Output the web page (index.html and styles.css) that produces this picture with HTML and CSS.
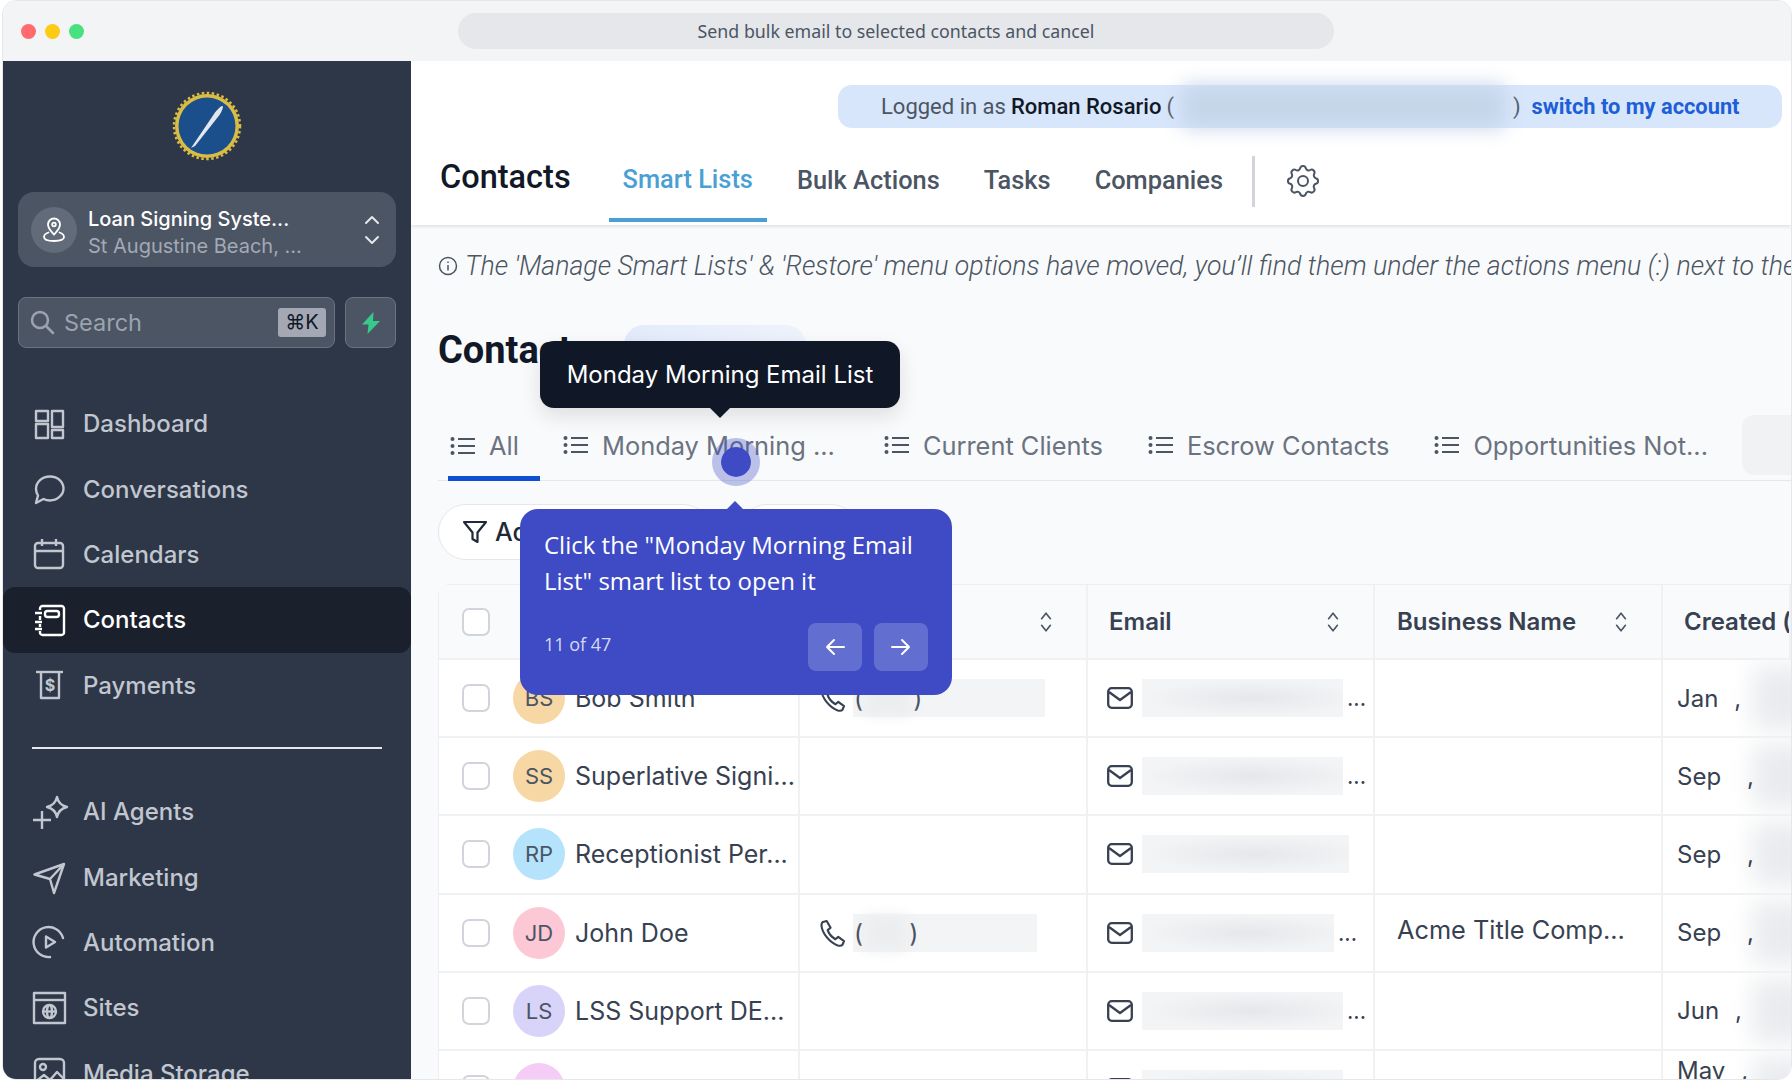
FILE: index.html
```html
<!DOCTYPE html>
<html lang="en">

<head>
    <meta charset="UTF-8">
    <title>Send bulk email to selected contacts and cancel</title>
    <link rel="stylesheet" href="styles.css">
</head>

<body>
    <svg class="icon-defs" width="0" height="0">
        <defs>
            <symbol id="list" viewBox="0 0 26 20">
                <circle cx="2.5" cy="3" r="2" fill="currentColor" />
                <circle cx="2.5" cy="10" r="2" fill="currentColor" />
                <circle cx="2.5" cy="17" r="2" fill="currentColor" />
                <path d="M8 3h17M8 10h17M8 17h17" fill="none" stroke="currentColor" stroke-width="2" />
            </symbol>
            <symbol id="mail" viewBox="0 0 26 22">
                <rect x="1.2" y="1.2" width="23.6" height="19.6" rx="3.5" fill="none" stroke="currentColor" stroke-width="2.3" />
                <path d="M2 5l11 8 11-8" fill="none" stroke="currentColor" stroke-width="2.3" />
            </symbol>
            <symbol id="phone" viewBox="0 0 26 28">
                <path d="M3 2.5l4-1 4 7-3 2.5c1 3.500 4 7 8 9.500l3-2.500 6 4.500-1.500 3.500c-1 1.500-3 1.500-5 1C10 24 2 14 1.500 6 1.500 4.500 2 3.200 3 2.500z" fill="none" stroke="currentColor" stroke-width="2.200" stroke-linejoin="round" />
            </symbol>
            <symbol id="sort" viewBox="0 0 12 20">
                <path d="M2 7l4-5 4 5M2 13l4 5 4-5" fill="none" stroke="currentColor" stroke-width="1.500" stroke-linecap="round" stroke-linejoin="round" />
            </symbol>
        </defs>
    </svg>

    <div class="window">
        <div class="title-bar">
            <div class="lights">
                <span class="light red"></span>
                <span class="light yellow"></span>
                <span class="light green"></span>
            </div>
            <div class="address">Send bulk email to selected contacts and cancel</div>
        </div>

        <div class="app">
            <aside class="sidebar">
                <div class="logo">
                    <svg width="70" height="70" viewBox="0 0 70 70">
                        <circle cx="35" cy="35" r="32" fill="#d9bd45" />
                        <circle cx="35" cy="35" r="33" fill="none" stroke="#d9bd45" stroke-width="2.500" stroke-dasharray="2.500 2.500" />
                        <circle cx="35" cy="35" r="28.500" fill="#1b4f8c" />
                        <path d="M19 57L42 23c2-3 7-8.500 8.500-8s-1 6-3 9L23 55z" fill="#e3e6ec" />
                    </svg>
                </div>

                <div class="location">
                    <span class="location-avatar">
                        <svg width="24" height="26" viewBox="0 0 24 26" fill="none" stroke="#fff" stroke-width="1.800">
                            <path d="M12 17.500c-3-3.500-6-6-6-10a6 6 0 0 1 12 0c0 4-3 6.500-6 10z" />
                            <circle cx="12" cy="7.500" r="1.800" />
                            <path d="M6.500 15.500C3.500 16.500 2 18 2 20c0 2.500 3 4 10 4s10-1.500 10-4c0-2-1.500-3.500-4.500-4.500" stroke-linecap="round" />
                        </svg>
                    </span>
                    <div class="location-text">
                        <div class="location-name">Loan Signing Syste...</div>
                        <div class="location-city">St Augustine Beach, ...</div>
                    </div>
                    <svg class="location-caret" width="16" height="30" viewBox="0 0 16 30" fill="none" stroke="#e5e7eb" stroke-width="2" stroke-linecap="round" stroke-linejoin="round">
                        <path d="M2 8l6-6 6 6M2 22l6 6 6-6" />
                    </svg>
                </div>

                <div class="search-row">
                    <div class="search">
                        <svg width="25" height="25" viewBox="0 0 25 25" fill="none" stroke="#9ca3af" stroke-width="2.500" stroke-linecap="round">
                            <circle cx="10" cy="10" r="8" />
                            <path d="M16 16l7 7" />
                        </svg>
                        <span class="search-label">Search</span>
                        <span class="kbd">⌘K</span>
                    </div>
                    <div class="bolt">
                        <svg width="20" height="22" viewBox="0 0 20 22">
                            <path d="M12.500 0L1 12.500h6.500L6.500 22 19 9h-7z" fill="#37ca8c" />
                        </svg>
                    </div>
                </div>

                <nav class="nav">
                    <a class="nav-item">
                        <svg class="nav-icon" viewBox="0 0 32 32">
                            <rect x="3" y="3" width="12" height="10" />
                            <rect x="3" y="16" width="12" height="14" />
                            <rect x="19" y="3" width="11" height="16" />
                            <rect x="19" y="22" width="11" height="8" />
                        </svg>
                        Dashboard
                    </a>
                    <a class="nav-item">
                        <svg class="nav-icon" viewBox="0 0 32 32">
                            <path d="M3 30l2-7.500C3.500 20 3 18 3 16 3 9 9 3.500 17 3.500S30.500 9 30.500 15.500 24 27.500 17 27.500c-2.500 0-4.500-.5-6.500-1.500z" />
                        </svg>
                        Conversations
                    </a>
                    <a class="nav-item">
                        <svg class="nav-icon" viewBox="0 0 32 32">
                            <rect x="2" y="5" width="28" height="25" rx="3" />
                            <path d="M2 13h28M9 1v7M23 1v7" />
                        </svg>
                        Calendars
                    </a>
                    <a class="nav-item active">
                        <svg class="nav-icon" viewBox="0 0 32 32">
                            <path d="M7 6V4.500a2.500 2.500 0 0 1 2.500-2.500h19A2.500 2.500 0 0 1 31 4.500v24a2.500 2.500 0 0 1-2.500 2.500h-19A2.500 2.500 0 0 1 7 28.500V27M7 12v4M7 20v3" />
                            <rect x="12" y="7" width="14" height="6" rx="2.500" />
                            <path d="M2 9h7M2 18h7M2 25h7" />
                        </svg>
                        Contacts
                    </a>
                    <a class="nav-item">
                        <svg class="nav-icon" viewBox="0 0 32 32">
                            <path d="M3 3h27" />
                            <path d="M8 3v26h18V3" />
                            <text class="dollar" x="17" y="22">$</text>
                        </svg>
                        Payments
                    </a>

                    <div class="nav-divider"></div>

                    <a class="nav-item">
                        <svg class="nav-icon" viewBox="0 0 32 32">
                            <path d="M24 1c1 5 4 8.500 10 10-6 1.500-9 5-10 10-1-5-4-8.500-10-10 6-1.500 9-5 10-10z" />
                            <path d="M0 24h18M9 15v18" />
                        </svg>
                        AI Agents
                    </a>
                    <a class="nav-item">
                        <svg class="nav-icon" viewBox="0 0 32 32">
                            <path d="M1.500 13.500L31 3 21 32l-4-14zM17 18L31 3" />
                        </svg>
                        Marketing
                    </a>
                    <a class="nav-item">
                        <svg class="nav-icon" viewBox="0 0 32 32">
                            <path d="M30 12A15 15 0 1 0 17 31" stroke-linecap="round" />
                            <path d="M13 10.500l9 5.500-9 5.500z" />
                        </svg>
                        Automation
                    </a>
                    <a class="nav-item">
                        <svg class="nav-icon" viewBox="0 0 32 32">
                            <rect x="1" y="1" width="31" height="30" />
                            <path d="M1 8h31" />
                            <circle cx="16.500" cy="19.500" r="6.500" />
                            <ellipse cx="16.500" cy="19.500" rx="2.500" ry="6.500" />
                            <path d="M10 19.500h13" />
                        </svg>
                        Sites
                    </a>
                    <a class="nav-item">
                        <svg class="nav-icon" viewBox="0 0 32 32">
                            <rect x="2" y="2" width="29" height="29" rx="4" />
                            <circle cx="10" cy="10" r="3" />
                            <path d="M2 25l9-7 6 5 7-8 7 7" />
                        </svg>
                        Media Storage
                    </a>
                </nav>
            </aside>

            <main class="main">
                <header class="page-header">
                    <div class="impersonate">
                        <span class="imp-muted">Logged in as</span>
                        <strong class="imp-name">Roman Rosario</strong>
                        <span class="imp-muted">(</span>
                        <span class="imp-redact"></span>
                        <span class="imp-muted">)</span>
                        <a class="imp-link">switch to my account</a>
                    </div>
                    <div class="subnav">
                        <div class="subnav-title">Contacts</div>
                        <a class="subnav-tab active">Smart Lists</a>
                        <a class="subnav-tab">Bulk Actions</a>
                        <a class="subnav-tab">Tasks</a>
                        <a class="subnav-tab">Companies</a>
                        <span class="subnav-sep"></span>
                        <svg class="gear" width="40" height="40" viewBox="0 0 24 24" fill="none" stroke="#4b5563" stroke-width="1.200" stroke-linejoin="round">
                            <path d="M10.300 4.300c.4-1.800 3-1.800 3.400 0a1.700 1.700 0 0 0 2.600 1.100c1.500-.9 3.300.8 2.400 2.400a1.700 1.700 0 0 0 1 2.500c1.800.4 1.800 3 0 3.400a1.700 1.700 0 0 0-1 2.600c.9 1.500-.9 3.300-2.400 2.400a1.700 1.700 0 0 0-2.600 1c-.4 1.800-3 1.800-3.400 0a1.700 1.700 0 0 0-2.600-1c-1.500.9-3.300-.9-2.400-2.400a1.700 1.700 0 0 0-1-2.600c-1.800-.4-1.800-3 0-3.400a1.700 1.700 0 0 0 1-2.500c-.9-1.600.9-3.300 2.400-2.400a1.700 1.700 0 0 0 2.600-1.100z" />
                            <circle cx="12" cy="12" r="3" />
                        </svg>
                    </div>
                </header>

                <div class="content">
                    <p class="notice">
                        <svg class="notice-icon" width="20" height="20" viewBox="0 0 20 20" fill="none" stroke="#4b5563" stroke-width="1.500">
                            <circle cx="10" cy="10" r="8.500" />
                            <path d="M10 9v5.500M10 5.500v1.500" />
                        </svg>
                        <em>The 'Manage Smart Lists' &amp; 'Restore' menu options have moved, you’ll find them under the actions menu (:) next to the smart list name</em>
                    </p>

                    <div class="heading-row">
                        <h1>Contacts</h1>
                        <span class="heading-pill"></span>
                    </div>

                    <div class="list-tabs">
                        <a class="list-tab active"><svg class="list-icon"><use href="#list" /></svg>All</a>
                        <a class="list-tab wide"><svg class="list-icon"><use href="#list" /></svg>Monday Morning ...</a>
                        <a class="list-tab"><svg class="list-icon"><use href="#list" /></svg>Current Clients</a>
                        <a class="list-tab"><svg class="list-icon"><use href="#list" /></svg>Escrow Contacts</a>
                        <a class="list-tab"><svg class="list-icon"><use href="#list" /></svg>Opportunities Not...</a>
                        <span class="list-more"></span>
                    </div>

                    <div class="filters">
                        <div class="filter-pill first">
                            <svg width="26" height="26" viewBox="0 0 26 26" fill="none" stroke="#1f2937" stroke-width="2.200" stroke-linejoin="round">
                                <path d="M2 3h22l-8.500 10.500V23l-5-3v-6.500z" />
                            </svg>
                            Advanced Filters
                        </div>
                        <div class="filter-pill second"></div>
                    </div>

                    <div class="table">
                        <div class="row head">
                            <div class="cell check-name"><span class="checkbox"></span></div>
                            <div class="cell sortable"><svg class="sort"><use href="#sort" /></svg></div>
                            <div class="cell sortable">Email<svg class="sort"><use href="#sort" /></svg></div>
                            <div class="cell sortable business">Business Name<svg class="sort"><use href="#sort" /></svg></div>
                            <div class="cell created">Created (</div>
                        </div>

                        <div class="row">
                            <div class="cell check-name"><span class="checkbox"></span><span class="avatar orange">BS</span><span class="name">Bob Smith</span></div>
                            <div class="cell phone"><svg class="phone-icon"><use href="#phone" /></svg><span class="phone-redact"><span>(</span><span class="gap"></span><span>)</span></span></div>
                            <div class="cell email"><svg class="mail-icon"><use href="#mail" /></svg><span class="redact email-redact"></span><span class="dots">...</span></div>
                            <div class="cell"></div>
                            <div class="cell date"><span>Jan</span><span class="comma c1">,</span><span class="date-blur"></span></div>
                        </div>
                        <div class="row">
                            <div class="cell check-name"><span class="checkbox"></span><span class="avatar orange">SS</span><span class="name">Superlative Signi...</span></div>
                            <div class="cell"></div>
                            <div class="cell email"><svg class="mail-icon"><use href="#mail" /></svg><span class="redact email-redact"></span><span class="dots">...</span></div>
                            <div class="cell"></div>
                            <div class="cell date"><span>Sep</span><span class="comma c2">,</span><span class="date-blur"></span></div>
                        </div>
                        <div class="row">
                            <div class="cell check-name"><span class="checkbox"></span><span class="avatar blue">RP</span><span class="name">Receptionist Per...</span></div>
                            <div class="cell"></div>
                            <div class="cell email"><svg class="mail-icon"><use href="#mail" /></svg><span class="redact email-redact short"></span></div>
                            <div class="cell"></div>
                            <div class="cell date"><span>Sep</span><span class="comma c2">,</span><span class="date-blur"></span></div>
                        </div>
                        <div class="row">
                            <div class="cell check-name"><span class="checkbox"></span><span class="avatar pink">JD</span><span class="name">John Doe</span></div>
                            <div class="cell phone"><svg class="phone-icon"><use href="#phone" /></svg><span class="phone-redact narrow"><span>(</span><span class="gap"></span><span>)</span></span></div>
                            <div class="cell email"><svg class="mail-icon"><use href="#mail" /></svg><span class="redact email-redact mid"></span><span class="dots">...</span></div>
                            <div class="cell business"><span class="company">Acme Title Comp...</span></div>
                            <div class="cell date"><span>Sep</span><span class="comma c2">,</span><span class="date-blur"></span></div>
                        </div>
                        <div class="row">
                            <div class="cell check-name"><span class="checkbox"></span><span class="avatar purple">LS</span><span class="name">LSS Support DE...</span></div>
                            <div class="cell"></div>
                            <div class="cell email"><svg class="mail-icon"><use href="#mail" /></svg><span class="redact email-redact"></span><span class="dots">...</span></div>
                            <div class="cell"></div>
                            <div class="cell date"><span>Jun</span><span class="comma c1">,</span><span class="date-blur"></span></div>
                        </div>
                        <div class="row">
                            <div class="cell check-name"><span class="checkbox"></span><span class="avatar lilac"></span></div>
                            <div class="cell"></div>
                            <div class="cell email"><svg class="mail-icon"><use href="#mail" /></svg><span class="redact email-redact"></span></div>
                            <div class="cell"></div>
                            <div class="cell date wrapped"><span>May</span><span class="comma c1">,</span><span class="date-blur"></span></div>
                        </div>
                    </div>
                </div>

                <div class="tooltip">Monday Morning Email List</div>
                <span class="hotspot"></span>

                <div class="tour">
                    <p class="tour-text">Click the "Monday Morning Email List" smart list to open it</p>
                    <div class="tour-foot">
                        <span class="tour-count">11 of 47</span>
                        <div class="tour-buttons">
                            <button class="tour-btn">
                                <svg width="20" height="18" viewBox="0 0 20 18" fill="none" stroke="#fff" stroke-width="2" stroke-linecap="round" stroke-linejoin="round"><path d="M19 9H2M9 2L2 9l7 7" /></svg>
                            </button>
                            <button class="tour-btn">
                                <svg width="20" height="18" viewBox="0 0 20 18" fill="none" stroke="#fff" stroke-width="2" stroke-linecap="round" stroke-linejoin="round"><path d="M1 9h17M11 2l7 7-7 7" /></svg>
                            </button>
                        </div>
                    </div>
                </div>
            </main>
        </div>
    </div>
</body>

</html>
```

FILE: styles.css
```css
* {
    box-sizing: border-box;
}

html,
body {
    margin: 0;
    padding: 0;
    height: 1080px;
    overflow: hidden;
    background-color: #fff;
    font-family: "Inter", sans-serif;
}

.icon-defs {
    position: absolute;
}

.window {
    width: 1790px;
    height: 1080px;
    margin-left: 2px;
    border: 1px solid #e5e7eb;
    border-radius: 14px;
    overflow: hidden;
    display: flex;
    flex-direction: column;
}

/* title bar */
.title-bar {
    height: 60px;
    flex-shrink: 0;
    background-color: #f3f4f6;
    display: flex;
    align-items: center;
    padding-left: 18px;
}

.lights {
    display: flex;
    gap: 9px;
}

.light {
    width: 15px;
    height: 15px;
    border-radius: 50%;
}

.red {
    background-color: #ff6b6e;
}

.yellow {
    background-color: #fdcb14;
}

.green {
    background-color: #47e27f;
}

.address {
    width: 876px;
    height: 36px;
    margin-left: 374px;
    border-radius: 18px;
    background-color: #e5e7eb;
    color: #4b5563;
    font-family: "Noto Sans", sans-serif;
    font-size: 17.800px;
    line-height: 36px;
    text-align: center;
}

.app {
    flex: 1;
    display: flex;
    min-height: 0;
}

/* sidebar */
.sidebar {
    width: 408px;
    flex-shrink: 0;
    background-color: #2d3748;
    overflow: hidden;
}

.logo {
    height: 70px;
    margin-top: 30px;
    display: flex;
    justify-content: center;
}

.location {
    height: 75px;
    margin: 31px 15px 0;
    padding: 0 16px 0 13px;
    border-radius: 16px;
    background-color: #4c5564;
    display: flex;
    align-items: center;
}

.location-avatar {
    width: 46px;
    height: 46px;
    border-radius: 50%;
    background-color: #626b79;
    display: flex;
    align-items: center;
    justify-content: center;
    flex-shrink: 0;
}

.location-text {
    flex: 1;
    margin-left: 11px;
    padding-top: 6px;
}

.location-name {
    color: #fff;
    font-size: 20px;
    font-weight: 500;
    line-height: 27px;
}

.location-city {
    color: #a3a9b5;
    font-size: 20px;
    line-height: 27px;
}

.search-row {
    display: flex;
    gap: 10px;
    margin: 30px 15px 0;
}

.search {
    flex: 1;
    height: 51px;
    padding: 0 8px 0 11px;
    border: 1px solid #6b7280;
    border-radius: 8px;
    background-color: #4c5564;
    display: flex;
    align-items: center;
}

.search-label {
    flex: 1;
    margin-left: 9px;
    color: #9ca3af;
    font-size: 23.500px;
}

.kbd {
    width: 48px;
    height: 29px;
    border-radius: 3px;
    background-color: #a3a8b4;
    color: #111827;
    font-size: 20px;
    line-height: 29px;
    text-align: center;
}

.bolt {
    width: 51px;
    height: 51px;
    border: 1px solid #6b7280;
    border-radius: 8px;
    background-color: #4c5564;
    display: flex;
    align-items: center;
    justify-content: center;
}

.nav {
    margin-top: 43px;
    display: flex;
    flex-direction: column;
}

.nav-item {
    height: 65.400px;
    padding-left: 30px;
    display: flex;
    align-items: center;
    gap: 18px;
    color: #c1c6cf;
    font-size: 24px;
    font-weight: 500;
    flex-shrink: 0;
}

.nav-item.active {
    background-color: #1a202c;
    border-radius: 12px;
    color: #fff;
}

.nav-icon {
    width: 32px;
    height: 32px;
    fill: none;
    stroke: currentColor;
    stroke-width: 2.400;
    stroke-linejoin: round;
    flex-shrink: 0;
    overflow: visible;
}

.dollar {
    fill: currentColor;
    stroke: none;
    font-size: 16px;
    font-weight: 700;
    text-anchor: middle;
}

.nav-divider {
    height: 2px;
    margin: 29px 29px 30px 29px;
    background-color: #e5e7eb;
    flex-shrink: 0;
}

/* main column */
.main {
    flex: 1;
    min-width: 0;
    background-color: #f9fafb;
    position: relative;
    overflow: hidden;
    font-family: "Roboto", sans-serif;
}

.page-header {
    height: 164px;
    background-color: #fff;
    box-shadow: 0 1px 4px rgba(17, 24, 39, 0.15);
    padding-top: 24px;
    position: relative;
}

.impersonate {
    height: 43px;
    margin-left: 427px;
    width: 944px;
    padding-left: 43px;
    border-radius: 14px;
    background-color: #d8e6fb;
    display: flex;
    align-items: center;
    gap: 5px;
    font-size: 22px;
    white-space: nowrap;
}

.imp-muted {
    color: #4b5563;
}

.imp-name {
    color: #111827;
    font-weight: 500;
}

.imp-redact {
    width: 323px;
    height: 43px;
    margin: 0 3px;
    background-color: #c5d5e9;
    filter: blur(10px);
    border-radius: 4px;
}

.imp-link {
    margin-left: 6px;
    color: #1d5fd6;
    font-weight: 700;
    font-size: 21.800px;
}

.subnav {
    height: 97px;
    padding-left: 29px;
    display: flex;
    align-items: flex-start;
}

.subnav-title {
    margin: 25px 38px 0 0;
    color: #111827;
    font-size: 32.500px;
    font-weight: 500;
    line-height: 49px;
}

.subnav-tab {
    height: 94px;
    padding: 14px 14px 0;
    margin-right: 16px;
    display: flex;
    align-items: center;
    border-bottom: 4px solid transparent;
    color: #4b5563;
    font-size: 25.400px;
    font-weight: 500;
}

.subnav-tab.active {
    color: #4a9fd4;
    border-bottom-color: #4a9fd4;
    padding-top: 11px;
}

.subnav-sep {
    width: 3px;
    height: 51px;
    margin: 28px 0 0 -1px;
    background-color: #d1d5db;
}

.gear {
    margin: 33px 0 0 28px;
}

.content {
    padding-left: 27px;
}

.notice {
    height: 30px;
    margin: 26px 0 0;
    display: flex;
    align-items: center;
    gap: 7px;
    color: #4b5563;
    font-size: 26.700px;
    font-weight: 300;
    white-space: nowrap;
}

.notice-icon {
    flex-shrink: 0;
}

.heading-row {
    height: 44px;
    margin-top: 47px;
    display: flex;
    gap: 33px;
}

h1 {
    margin: 0;
    color: #111827;
    font-size: 38px;
    font-weight: 700;
    line-height: 44px;
}

.heading-pill {
    width: 182px;
    height: 40px;
    margin-top: -3px;
    border-radius: 20px;
    background: linear-gradient(90deg, #e3ebfb, #eef2fb);
}

/* list tabs */
.list-tabs {
    height: 66px;
    margin-top: 43px;
    border-bottom: 1px solid #e5e7eb;
    display: flex;
    position: relative;
}

.list-tab {
    height: 66px;
    padding: 0 22px 6px 11px;
    margin-right: 12px;
    display: flex;
    align-items: center;
    gap: 13px;
    color: #6b7280;
    font-family: "Inter", sans-serif;
    font-size: 25.400px;
    white-space: nowrap;
}

.list-tab.active {
    width: 92px;
    padding: 0 0 0 2px;
    margin-left: 10px;
    border-bottom: 5px solid #0f4fd1;
}

.list-tab.wide {
    margin-right: 16px;
}

.list-icon {
    width: 26px;
    height: 20px;
    color: #4b5563;
    flex-shrink: 0;
}

.list-more {
    position: absolute;
    left: 1304px;
    top: 0;
    width: 90px;
    height: 60px;
    border-radius: 12px;
    background-color: #f1f2f4;
}

/* filters */
.filters {
    height: 56px;
    margin-top: 23px;
    display: flex;
    gap: 28px;
}

.filter-pill {
    height: 56px;
    border: 1px solid #e5e7eb;
    border-radius: 28px;
    background-color: #fff;
    display: flex;
    align-items: center;
    gap: 7px;
    color: #1f2937;
    font-family: "Inter", sans-serif;
    font-size: 25px;
    white-space: nowrap;
    overflow: hidden;
}

.filter-pill.first {
    width: 273px;
    padding-left: 23px;
    font-weight: 500;
}

.filter-pill.second {
    width: 120px;
}

/* table */
.table {
    margin-top: 24px;
    border: 1px solid #eceef1;
    border-right: none;
    border-radius: 12px 0 0 0;
    background-color: #fff;
    font-family: "Inter", sans-serif;
}

.row {
    height: 78.200px;
    display: grid;
    grid-template-columns: 361px 288px 287px 288px 1fr;
    border-bottom: 2px solid #f0f1f3;
    overflow: hidden;
}

.row.head {
    height: 75px;
    background-color: #f9fafb;
    color: #374151;
    font-size: 24px;
    font-weight: 600;
}

.cell {
    min-width: 0;
    height: 100%;
    border-right: 2px solid #f0f1f3;
    display: flex;
    align-items: center;
    padding-left: 21px;
    white-space: nowrap;
    overflow: hidden;
    font-size: 25px;
    color: #374151;
}

.row.head .cell {
    font-size: 24px;
}

.check-name {
    padding-left: 23px;
}

.checkbox {
    width: 28px;
    height: 28px;
    border: 2px solid #d1d5db;
    border-radius: 7px;
    background-color: #fff;
    flex-shrink: 0;
}

.avatar {
    width: 52px;
    height: 52px;
    margin-left: 23px;
    margin-right: 10px;
    border-radius: 50%;
    display: flex;
    align-items: center;
    justify-content: center;
    flex-shrink: 0;
    color: #4b5563;
    font-size: 22px;
}

.orange {
    background-color: #f7d7a4;
}

.blue {
    background-color: #b4e3fb;
}

.pink {
    background-color: #fcc8d6;
}

.purple {
    background-color: #d8d3f9;
}

.lilac {
    background-color: #f4ccf6;
}

.sortable {
    justify-content: space-between;
    padding-right: 33px;
}

.business {
    padding-left: 22px;
}

.company {
    font-size: 25.300px;
    margin-top: -6px;
}

.sort {
    width: 14px;
    height: 22px;
    margin-left: auto;
    color: #4b5563;
}

.created {
    padding-left: 21px;
}

.phone {
    padding-left: 20px;
    padding-right: 0;
}

.phone-icon {
    width: 25px;
    height: 28px;
    flex-shrink: 0;
    color: #374151;
}

.phone-redact {
    width: 192px;
    height: 38px;
    margin-left: 8px;
    padding-left: 1px;
    display: flex;
    align-items: center;
    background-color: #f3f4f6;
    flex-shrink: 0;
}

.phone-redact.narrow {
    width: 184px;
}

.gap {
    width: 46px;
    height: 36px;
    margin: 0 2px;
    background-color: #ecedef;
    filter: blur(6px);
}

.phone-redact.narrow .gap {
    width: 42px;
}

.redact {
    background-color: #f3f4f6;
    background-image: radial-gradient(ellipse at 55% 50%, #e6e7ea 0%, #f3f4f6 70%);
}

.email {
    padding-left: 19px;
}

.mail-icon {
    width: 26px;
    height: 22px;
    flex-shrink: 0;
    color: #374151;
}

.email-redact {
    width: 201px;
    height: 38px;
    margin-left: 9px;
}

.email-redact.short {
    width: 207px;
}

.email-redact.mid {
    width: 192px;
}

.dots {
    margin-left: 4px;
    font-size: 22px;
}

.date {
    padding-left: 14px;
    border-right: none;
    position: relative;
    font-size: 24px;
}

.date span:not(.date-blur) {
    position: relative;
    z-index: 1;
}

.comma.c1 {
    margin-left: 16px;
}

.comma.c2 {
    margin-left: 26px;
}

.date-blur {
    position: absolute;
    left: 90px;
    top: 6px;
    width: 60px;
    height: 64px;
    background-color: #e9ebee;
    filter: blur(12px);
}

.date.wrapped {
    align-items: flex-start;
    padding-top: 5px;
}

/* guided tour overlays */
.tooltip {
    position: absolute;
    left: 129px;
    top: 280px;
    width: 360px;
    height: 67px;
    border-radius: 14px;
    background-color: #101828;
    box-shadow: 0 8px 20px rgba(17, 24, 39, 0.12);
    color: #fff;
    font-family: "Inter", sans-serif;
    font-size: 24px;
    line-height: 67px;
    text-align: center;
    white-space: nowrap;
}

.tooltip::after {
    content: "";
    position: absolute;
    left: 170px;
    top: 67px;
    border: 10px solid transparent;
    border-bottom: none;
    border-top-color: #101828;
}

.hotspot {
    position: absolute;
    left: 301px;
    top: 377px;
    width: 48px;
    height: 48px;
    border-radius: 50%;
    background-color: #3e4bc4;
    border: 9px solid rgba(62, 75, 196, 0.33);
    background-clip: padding-box;
}

.tour {
    position: absolute;
    left: 109px;
    top: 448px;
    width: 432px;
    height: 186px;
    padding: 18px 24px 0 24px;
    border-radius: 18px;
    background-color: #3e4bc4;
    color: #fff;
    font-family: "Open Sans", sans-serif;
}

.tour::before {
    content: "";
    position: absolute;
    left: 207px;
    top: -8px;
    border: 8px solid transparent;
    border-top: none;
    border-bottom-color: #3e4bc4;
}

.tour-text {
    margin: 0;
    height: 96px;
    font-size: 24px;
    line-height: 36px;
}

.tour-foot {
    display: flex;
    align-items: center;
    justify-content: space-between;
}

.tour-count {
    color: #d5d8f3;
    font-size: 18px;
    margin-top: -6px;
}

.tour-buttons {
    display: flex;
    gap: 12px;
}

.tour-btn {
    width: 54px;
    height: 48px;
    padding: 0;
    border: none;
    border-radius: 8px;
    background-color: #636fd0;
    display: flex;
    align-items: center;
    justify-content: center;
}
```
